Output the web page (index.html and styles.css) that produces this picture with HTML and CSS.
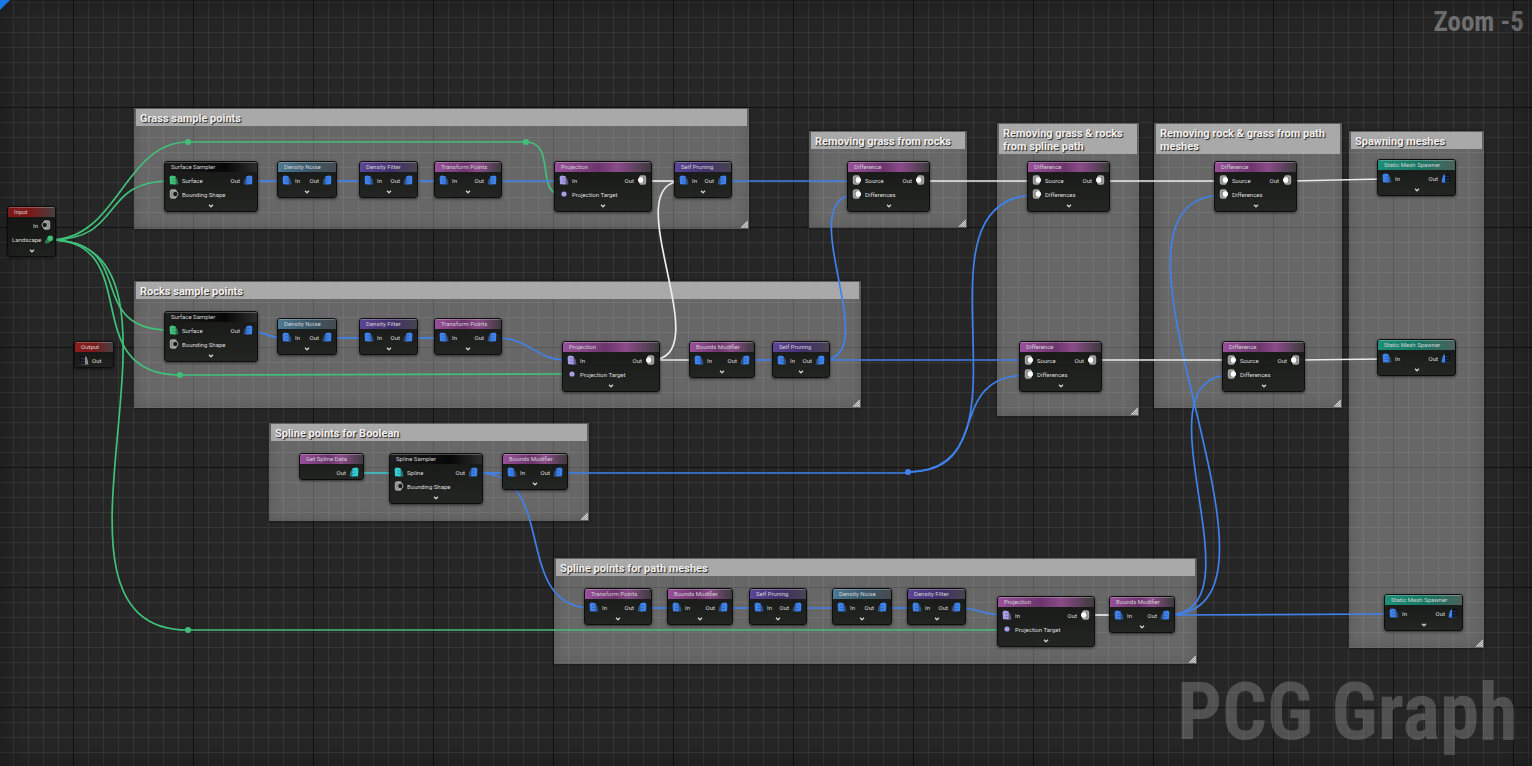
FILE: index.html
```html
<!DOCTYPE html>
<html lang="en">
<head>
  <meta charset="UTF-8">
  <title>PCG Graph</title>
  <link rel="stylesheet" href="styles.css">
</head>
<body>
  <!-- pin shapes, drawn for the input side -->
  <svg class="symbols" aria-hidden="true">
    <symbol id="stack" viewBox="0 0 10 10">
      <path d="M5 1.5 L8 3.5 Q9.4 6 9.4 9.5 H5z" fill="currentColor" opacity=".5"/>
      <path d="M.6 2.5 Q.8 .4 3 .4 L6.6 1.3 V9.5 L1 9.2z" fill="currentColor"/>
      <path d="M3.2 3.5 L6.6 4 M3.2 6.4 L6.6 6.9" stroke="#10203a" stroke-width=".5" opacity=".5"/>
    </symbol>
    <symbol id="stack-open" viewBox="0 0 10 10">
      <path d="M5 .8 L7.5 2 Q9.2 5 9.4 9.5 H5z" fill="currentColor"/>
      <path d="M1 2.5 Q1 .5 3 .5 L6 1 V9.5 L1.5 9z" fill="#10131c"/>
      <path d="M2 3.4 L6 4 M2 6.4 L6 6.9 M1.2 9 L6 9.4" stroke="currentColor" stroke-width=".5" opacity=".7"/>
    </symbol>
    <symbol id="socket" viewBox="0 0 10 10">
      <path d="M3 .3 H6.5 L8 2 V8 L6.5 9.7 H3 Q.8 9.7 .8 7.5 V2.5 Q.8 .3 3 .3z" fill="#a3a3a3"/>
      <path d="M3.2 2 V8" stroke="#666" stroke-width=".8"/>
      <circle cx="6.3" cy="5" r="2.7" fill="#fff"/>
    </symbol>
    <symbol id="socket-open" viewBox="0 0 10 10">
      <path d="M3 .3 H6.5 L8 2 V8 L6.5 9.7 H3 Q.8 9.7 .8 7.5 V2.5 Q.8 .3 3 .3z" fill="#a3a3a3"/>
      <path d="M3 2 V8" stroke="#555" stroke-width=".6"/>
      <circle cx="6.3" cy="5" r="2.7" fill="#181a18" stroke="#c4c4c4" stroke-width=".8"/>
    </symbol>
    <symbol id="multi" viewBox="0 0 10 10">
      <path d="M1 7 L5 2.5 L7.5 7 L4 9.5 H1z" fill="currentColor" opacity=".55"/>
      <circle cx="6.2" cy="4.2" r="2.8" fill="currentColor"/>
    </symbol>
    <symbol id="dot" viewBox="0 0 10 10">
      <circle cx="5" cy="5" r="2.6" fill="currentColor"/>
    </symbol>
    <symbol id="chevron" viewBox="0 0 6 4">
      <path d="M1 .8 L3 2.8 L5 .8" fill="none" stroke="currentColor" stroke-width="1.3"/>
    </symbol>
    <symbol id="grip" viewBox="0 0 8 8">
      <path d="M0 8 L8 0 M2.5 8 L8 2.5 M5 8 L8 5 M7 8 L8 7" stroke="#ddd" stroke-width="1.2"/>
    </symbol>
  </svg>

  <main class="graph">
    <!-- comment boxes -->
    <section class="comment c-grass"><h2>Grass sample points</h2><svg class="grip"><use href="#grip"/></svg></section>
    <section class="comment c-rocks"><h2>Rocks sample points</h2><svg class="grip"><use href="#grip"/></svg></section>
    <section class="comment c-boolean"><h2>Spline points for Boolean</h2><svg class="grip"><use href="#grip"/></svg></section>
    <section class="comment c-path"><h2>Spline points for path meshes</h2><svg class="grip"><use href="#grip"/></svg></section>
    <section class="comment c-from-rocks"><h2>Removing grass from rocks</h2><svg class="grip"><use href="#grip"/></svg></section>
    <section class="comment c-from-spline"><h2>Removing grass &amp; rocks from spline path</h2><svg class="grip"><use href="#grip"/></svg></section>
    <section class="comment c-from-path"><h2>Removing rock &amp; grass from path meshes</h2><svg class="grip"><use href="#grip"/></svg></section>
    <section class="comment c-spawning"><h2>Spawning meshes</h2><svg class="grip"><use href="#grip"/></svg></section>

    <!-- wires -->
    <svg class="wires" aria-hidden="true">
      <g class="wire surface">
        <path d="M50 240 C118 240 124 142 188 142 H526 C556 142 536 194 560 194"/>
        <path d="M50 240 C125 240 98 181 170 181"/>
        <path d="M50 240 C140 240 82 330 170 330"/>
        <path d="M50 240 C146 240 75 375 180 375 L566 374"/>
        <path d="M50 240 C222 240 12 630 188 630 H1003"/>
      </g>
      <g class="wire point">
        <path d="M253 181 H282"/>
        <path d="M332 181 H364"/>
        <path d="M413 181 H439"/>
        <path d="M497 181 H559"/>
        <path d="M727 181 H852"/>
        <path d="M253 331 C262 331 270 338 282 338"/>
        <path d="M332 338 H364"/>
        <path d="M413 338 H439"/>
        <path d="M497 338 C530 338 535 360 567 360"/>
        <path d="M750 360 H777"/>
        <path d="M825 360 H1024"/>
        <path d="M822 360 C887 360 789 195 856 195"/>
        <path d="M478 473 H507"/>
        <path d="M478 473 C560 473 510 608 592 608"/>
        <path d="M563 473 H908"/>
        <path d="M908 472 C1045 472 901 195 1037 195"/>
        <path d="M908 472 C995 472 942 375 1028 375"/>
        <path d="M647 608 H672"/>
        <path d="M728 608 H754"/>
        <path d="M802 608 H837"/>
        <path d="M887 608 H912"/>
        <path d="M961 608 C975 608 985 615 1002 615"/>
        <path d="M1170 615 L1389 614"/>
        <path d="M1167 615 C1323 615 1066 195 1224 195"/>
        <path d="M1167 615 C1267 615 1130 375 1231 375"/>
      </g>
      <g class="wire spline">
        <path d="M359 473 H394"/>
      </g>
      <g class="wire any">
        <path d="M647 181 H679"/>
        <path d="M651 360 C721 360 613 181 683 181"/>
        <path d="M655 360 H694"/>
        <path d="M925 181 H1032"/>
        <path d="M1105 181 H1219"/>
        <path d="M1292 181 L1382 179"/>
        <path d="M1097 360 H1227"/>
        <path d="M1300 360 L1382 359"/>
        <path d="M1090 615 H1114"/>
      </g>
      <g class="reroute surface">
        <circle cx="188" cy="142" r="3"/>
        <circle cx="526" cy="142" r="3"/>
        <circle cx="180" cy="375" r="3"/>
        <circle cx="188" cy="630" r="3"/>
      </g>
      <g class="reroute point">
        <circle cx="908" cy="472" r="3"/>
      </g>
    </svg>

    <!-- graph input / output -->
    <article class="node red n-input">
      <h3>Input</h3>
      <div class="row"><span class="pin out any">In<svg><use href="#socket-open"/></svg></span></div>
      <div class="row"><span class="pin out surface multi">Landscape<svg><use href="#multi"/></svg></span></div>
      <button class="expand" aria-label="Expand Input"><svg><use href="#chevron"/></svg></button>
    </article>
    <article class="node red n-output">
      <h3>Output</h3>
      <div class="row"><span class="pin idle"><svg><use href="#stack-open"/></svg>Out</span></div>
    </article>

    <!-- grass -->
    <article class="node black sampler n-grass-sampler">
      <h3>Surface Sampler</h3>
      <div class="row"><span class="pin surface"><svg><use href="#stack"/></svg>Surface</span><span class="pin out point">Out<svg><use href="#stack"/></svg></span></div>
      <div class="row"><span class="pin"><svg><use href="#socket-open"/></svg>Bounding Shape</span></div>
      <button class="expand" aria-label="Expand Surface Sampler"><svg><use href="#chevron"/></svg></button>
    </article>
    <article class="node steel noise n-grass-noise">
      <h3>Density Noise</h3>
      <div class="row"><span class="pin point"><svg><use href="#stack"/></svg>In</span><span class="pin out point">Out<svg><use href="#stack"/></svg></span></div>
      <button class="expand" aria-label="Expand Density Noise"><svg><use href="#chevron"/></svg></button>
    </article>
    <article class="node violet filter n-grass-filter">
      <h3>Density Filter</h3>
      <div class="row"><span class="pin point"><svg><use href="#stack"/></svg>In</span><span class="pin out point">Out<svg><use href="#stack"/></svg></span></div>
      <button class="expand" aria-label="Expand Density Filter"><svg><use href="#chevron"/></svg></button>
    </article>
    <article class="node pink transform n-grass-transform">
      <h3>Transform Points</h3>
      <div class="row"><span class="pin point"><svg><use href="#stack"/></svg>In</span><span class="pin out point">Out<svg><use href="#stack"/></svg></span></div>
      <button class="expand" aria-label="Expand Transform Points"><svg><use href="#chevron"/></svg></button>
    </article>
    <article class="node pink projection n-grass-projection">
      <h3>Projection</h3>
      <div class="row"><span class="pin concrete"><svg><use href="#stack"/></svg>In</span><span class="pin out">Out<svg><use href="#socket"/></svg></span></div>
      <div class="row"><span class="pin concrete"><svg><use href="#dot"/></svg>Projection Target</span></div>
      <button class="expand" aria-label="Expand Projection"><svg><use href="#chevron"/></svg></button>
    </article>
    <article class="node violet pruning n-grass-pruning">
      <h3>Self Pruning</h3>
      <div class="row"><span class="pin point"><svg><use href="#stack"/></svg>In</span><span class="pin out point">Out<svg><use href="#stack"/></svg></span></div>
      <button class="expand" aria-label="Expand Self Pruning"><svg><use href="#chevron"/></svg></button>
    </article>

    <!-- rocks -->
    <article class="node black sampler n-rocks-sampler">
      <h3>Surface Sampler</h3>
      <div class="row"><span class="pin surface"><svg><use href="#stack"/></svg>Surface</span><span class="pin out point">Out<svg><use href="#stack"/></svg></span></div>
      <div class="row"><span class="pin"><svg><use href="#socket-open"/></svg>Bounding Shape</span></div>
      <button class="expand" aria-label="Expand Surface Sampler"><svg><use href="#chevron"/></svg></button>
    </article>
    <article class="node steel noise n-rocks-noise">
      <h3>Density Noise</h3>
      <div class="row"><span class="pin point"><svg><use href="#stack"/></svg>In</span><span class="pin out point">Out<svg><use href="#stack"/></svg></span></div>
      <button class="expand" aria-label="Expand Density Noise"><svg><use href="#chevron"/></svg></button>
    </article>
    <article class="node violet filter n-rocks-filter">
      <h3>Density Filter</h3>
      <div class="row"><span class="pin point"><svg><use href="#stack"/></svg>In</span><span class="pin out point">Out<svg><use href="#stack"/></svg></span></div>
      <button class="expand" aria-label="Expand Density Filter"><svg><use href="#chevron"/></svg></button>
    </article>
    <article class="node pink transform n-rocks-transform">
      <h3>Transform Points</h3>
      <div class="row"><span class="pin point"><svg><use href="#stack"/></svg>In</span><span class="pin out point">Out<svg><use href="#stack"/></svg></span></div>
      <button class="expand" aria-label="Expand Transform Points"><svg><use href="#chevron"/></svg></button>
    </article>
    <article class="node pink projection n-rocks-projection">
      <h3>Projection</h3>
      <div class="row"><span class="pin concrete"><svg><use href="#stack"/></svg>In</span><span class="pin out">Out<svg><use href="#socket"/></svg></span></div>
      <div class="row"><span class="pin concrete"><svg><use href="#dot"/></svg>Projection Target</span></div>
      <button class="expand" aria-label="Expand Projection"><svg><use href="#chevron"/></svg></button>
    </article>
    <article class="node pink bounds n-rocks-bounds">
      <h3>Bounds Modifier</h3>
      <div class="row"><span class="pin point"><svg><use href="#stack"/></svg>In</span><span class="pin out point">Out<svg><use href="#stack"/></svg></span></div>
      <button class="expand" aria-label="Expand Bounds Modifier"><svg><use href="#chevron"/></svg></button>
    </article>
    <article class="node violet pruning n-rocks-pruning">
      <h3>Self Pruning</h3>
      <div class="row"><span class="pin point"><svg><use href="#stack"/></svg>In</span><span class="pin out point">Out<svg><use href="#stack"/></svg></span></div>
      <button class="expand" aria-label="Expand Self Pruning"><svg><use href="#chevron"/></svg></button>
    </article>

    <!-- spline for boolean -->
    <article class="node pink n-spline-data">
      <h3>Get Spline Data</h3>
      <div class="row"><span class="pin out spline">Out<svg><use href="#stack"/></svg></span></div>
    </article>
    <article class="node black sampler n-spline-sampler">
      <h3>Spline Sampler</h3>
      <div class="row"><span class="pin spline"><svg><use href="#stack"/></svg>Spline</span><span class="pin out point">Out<svg><use href="#stack"/></svg></span></div>
      <div class="row"><span class="pin"><svg><use href="#socket-open"/></svg>Bounding Shape</span></div>
      <button class="expand" aria-label="Expand Spline Sampler"><svg><use href="#chevron"/></svg></button>
    </article>
    <article class="node pink bounds n-spline-bounds">
      <h3>Bounds Modifier</h3>
      <div class="row"><span class="pin point"><svg><use href="#stack"/></svg>In</span><span class="pin out point">Out<svg><use href="#stack"/></svg></span></div>
      <button class="expand" aria-label="Expand Bounds Modifier"><svg><use href="#chevron"/></svg></button>
    </article>

    <!-- spline for path meshes -->
    <article class="node pink transform n-path-transform">
      <h3>Transform Points</h3>
      <div class="row"><span class="pin point"><svg><use href="#stack"/></svg>In</span><span class="pin out point">Out<svg><use href="#stack"/></svg></span></div>
      <button class="expand" aria-label="Expand Transform Points"><svg><use href="#chevron"/></svg></button>
    </article>
    <article class="node pink bounds n-path-bounds">
      <h3>Bounds Modifier</h3>
      <div class="row"><span class="pin point"><svg><use href="#stack"/></svg>In</span><span class="pin out point">Out<svg><use href="#stack"/></svg></span></div>
      <button class="expand" aria-label="Expand Bounds Modifier"><svg><use href="#chevron"/></svg></button>
    </article>
    <article class="node violet pruning n-path-pruning">
      <h3>Self Pruning</h3>
      <div class="row"><span class="pin point"><svg><use href="#stack"/></svg>In</span><span class="pin out point">Out<svg><use href="#stack"/></svg></span></div>
      <button class="expand" aria-label="Expand Self Pruning"><svg><use href="#chevron"/></svg></button>
    </article>
    <article class="node steel noise n-path-noise">
      <h3>Density Noise</h3>
      <div class="row"><span class="pin point"><svg><use href="#stack"/></svg>In</span><span class="pin out point">Out<svg><use href="#stack"/></svg></span></div>
      <button class="expand" aria-label="Expand Density Noise"><svg><use href="#chevron"/></svg></button>
    </article>
    <article class="node violet filter n-path-filter">
      <h3>Density Filter</h3>
      <div class="row"><span class="pin point"><svg><use href="#stack"/></svg>In</span><span class="pin out point">Out<svg><use href="#stack"/></svg></span></div>
      <button class="expand" aria-label="Expand Density Filter"><svg><use href="#chevron"/></svg></button>
    </article>
    <article class="node pink projection n-path-projection">
      <h3>Projection</h3>
      <div class="row"><span class="pin concrete"><svg><use href="#stack"/></svg>In</span><span class="pin out">Out<svg><use href="#socket"/></svg></span></div>
      <div class="row"><span class="pin concrete"><svg><use href="#dot"/></svg>Projection Target</span></div>
      <button class="expand" aria-label="Expand Projection"><svg><use href="#chevron"/></svg></button>
    </article>
    <article class="node pink bounds n-path-bounds-last">
      <h3>Bounds Modifier</h3>
      <div class="row"><span class="pin point"><svg><use href="#stack"/></svg>In</span><span class="pin out point">Out<svg><use href="#stack"/></svg></span></div>
      <button class="expand" aria-label="Expand Bounds Modifier"><svg><use href="#chevron"/></svg></button>
    </article>

    <!-- differences -->
    <article class="node pink difference n-diff-grass-rocks">
      <h3>Difference</h3>
      <div class="row"><span class="pin"><svg><use href="#socket"/></svg>Source</span><span class="pin out">Out<svg><use href="#socket"/></svg></span></div>
      <div class="row"><span class="pin"><svg><use href="#socket"/></svg>Differences</span></div>
      <button class="expand" aria-label="Expand Difference"><svg><use href="#chevron"/></svg></button>
    </article>
    <article class="node pink difference n-diff-grass-spline">
      <h3>Difference</h3>
      <div class="row"><span class="pin"><svg><use href="#socket"/></svg>Source</span><span class="pin out">Out<svg><use href="#socket"/></svg></span></div>
      <div class="row"><span class="pin"><svg><use href="#socket"/></svg>Differences</span></div>
      <button class="expand" aria-label="Expand Difference"><svg><use href="#chevron"/></svg></button>
    </article>
    <article class="node pink difference n-diff-grass-path">
      <h3>Difference</h3>
      <div class="row"><span class="pin"><svg><use href="#socket"/></svg>Source</span><span class="pin out">Out<svg><use href="#socket"/></svg></span></div>
      <div class="row"><span class="pin"><svg><use href="#socket"/></svg>Differences</span></div>
      <button class="expand" aria-label="Expand Difference"><svg><use href="#chevron"/></svg></button>
    </article>
    <article class="node pink difference n-diff-rocks-spline">
      <h3>Difference</h3>
      <div class="row"><span class="pin"><svg><use href="#socket"/></svg>Source</span><span class="pin out">Out<svg><use href="#socket"/></svg></span></div>
      <div class="row"><span class="pin"><svg><use href="#socket"/></svg>Differences</span></div>
      <button class="expand" aria-label="Expand Difference"><svg><use href="#chevron"/></svg></button>
    </article>
    <article class="node pink difference n-diff-rocks-path">
      <h3>Difference</h3>
      <div class="row"><span class="pin"><svg><use href="#socket"/></svg>Source</span><span class="pin out">Out<svg><use href="#socket"/></svg></span></div>
      <div class="row"><span class="pin"><svg><use href="#socket"/></svg>Differences</span></div>
      <button class="expand" aria-label="Expand Difference"><svg><use href="#chevron"/></svg></button>
    </article>

    <!-- spawners -->
    <article class="node teal spawner n-spawn-grass">
      <h3>Static Mesh Spawner</h3>
      <div class="row"><span class="pin point"><svg><use href="#stack"/></svg>In</span><span class="pin out point">Out<svg><use href="#stack-open"/></svg></span></div>
      <button class="expand" aria-label="Expand Static Mesh Spawner"><svg><use href="#chevron"/></svg></button>
    </article>
    <article class="node teal spawner n-spawn-rocks">
      <h3>Static Mesh Spawner</h3>
      <div class="row"><span class="pin point"><svg><use href="#stack"/></svg>In</span><span class="pin out point">Out<svg><use href="#stack-open"/></svg></span></div>
      <button class="expand" aria-label="Expand Static Mesh Spawner"><svg><use href="#chevron"/></svg></button>
    </article>
    <article class="node teal spawner n-spawn-path">
      <h3>Static Mesh Spawner</h3>
      <div class="row"><span class="pin point"><svg><use href="#stack"/></svg>In</span><span class="pin out point">Out<svg><use href="#stack-open"/></svg></span></div>
      <button class="expand" aria-label="Expand Static Mesh Spawner"><svg><use href="#chevron"/></svg></button>
    </article>

    <div class="zoom">Zoom -5</div>
    <div class="watermark">PCG Graph</div>
  </main>
</body>
</html>
```
FILE: styles.css
```css
* {
  box-sizing: border-box;
}

body {
  margin: 0;
  background: #262626;
  font-family: Roboto, "Liberation Sans", sans-serif;
  color: #d0d0d0;
}

.symbols {
  position: absolute;
  width: 0;
  height: 0;
}

/* canvas with a fine 15px grid and a 120px ruler grid */
.graph {
  position: relative;
  min-height: 100vh;
  overflow: hidden;
  background-color: #262626;
  background-image:
    linear-gradient(#121212 1px, transparent 1px),
    linear-gradient(90deg, #121212 1px, transparent 1px),
    linear-gradient(#353535 1px, transparent 1px),
    linear-gradient(90deg, #353535 1px, transparent 1px);
  background-size: 120px 120px, 120px 120px, 15px 15px, 15px 15px;
  background-position: 0 107px, 73px 0, 0 2px, 13px 0;
}

/* edge vignette */
.graph::after {
  content: "";
  position: absolute;
  inset: 0;
  box-shadow: inset 0 0 30px rgba(0, 0, 0, 0.35);
  pointer-events: none;
}

/* blue corner marker */
.graph::before {
  content: "";
  position: absolute;
  z-index: 1;
  left: 0;
  top: 0;
  border-top: 10px solid #1a78e6;
  border-right: 10px solid transparent;
}

.wires {
  position: absolute;
  left: 0;
  top: 0;
  width: 100%;
  height: 100%;
  overflow: visible;
}

.wire {
  fill: none;
  stroke: currentColor;
  stroke-width: 1.7;
}

.reroute {
  fill: currentColor;
}

.surface { color: #41c07a; }
.point { color: #3f82ec; }
.spline { color: #35ccd4; }
.any { color: #ececec; }
.idle { color: #8c8c8c; }
.concrete { color: #a99ce6; }

/* comments */
.comment {
  position: absolute;
  padding: 1px 2px;
  background: rgba(255, 255, 255, 0.3);
  box-shadow: 0 0 2px 1px rgba(0, 0, 0, 0.3), inset 0 0 12px rgba(0, 0, 0, 0.15);
}

.comment h2 {
  margin: 0;
  padding: 3px 4px 1px;
  background: #a9a9a9;
  color: #f0f0f0;
  font-size: 11px;
  font-weight: 700;
  line-height: 13px;
  text-shadow: 1px 1px 1px #222;
}

.grip {
  position: absolute;
  right: 1px;
  bottom: 1px;
  width: 7px;
  height: 7px;
}

.c-grass { left: 134px; top: 108px; width: 615px; height: 121px; }
.c-rocks { left: 134px; top: 281px; width: 727px; height: 127px; }
.c-boolean { left: 269px; top: 423px; width: 320px; height: 98px; }
.c-path { left: 554px; top: 558px; width: 643px; height: 106px; }
.c-from-rocks { left: 809px; top: 131px; width: 158px; height: 97px; }
.c-from-spline { left: 997px; top: 123px; width: 142px; height: 293px; }
.c-from-path { left: 1154px; top: 123px; width: 188px; height: 285px; }
.c-spawning { left: 1349px; top: 131px; width: 135px; height: 517px; }

/* nodes */
.node {
  position: absolute;
  overflow: hidden;
  border: 1px solid #0c0d0c;
  border-radius: 3px;
  background: linear-gradient(rgba(18, 19, 18, 0.94), rgba(30, 33, 29, 0.94));
  box-shadow: 0 1px 3px rgba(0, 0, 0, 0.6);
  font-size: 6px;
}

.node h3 {
  margin: 0 0 1px;
  padding: 0 6px 2px;
  border-top: 1px solid rgba(255, 255, 255, 0.25);
  color: #d2d2d2;
  font-size: 6px;
  font-weight: 400;
  line-height: 7px;
  white-space: nowrap;
}

.row {
  display: flex;
  height: 14px;
  padding: 0 4px;
  align-items: center;
  white-space: nowrap;
}

/* the pin class colours the icon, the label stays light */
.pin {
  display: flex;
  align-items: center;
  gap: 3px;
  -webkit-text-fill-color: #dedede;
}

.pin svg {
  width: 10px;
  height: 10px;
}

.pin.out {
  margin-left: auto;
}

.pin.out svg {
  transform: scaleX(-1);
}

.pin.multi svg {
  transform: none;
}

.expand {
  display: flex;
  width: 100%;
  height: 10px;
  padding: 0;
  border: 0;
  align-items: center;
  justify-content: center;
  background: none;
  color: #d0d0d0;
  cursor: pointer;
}

.expand svg {
  width: 6px;
  height: 4px;
}

.red h3 { background: linear-gradient(90deg, #8c1c1c, #7a1a1a 50%, #454040); }
.black h3 { background: linear-gradient(90deg, #1c1d1c, #070707 65%, #2c2c2c); }
.steel h3 { background: linear-gradient(90deg, #4f7a93, #3a5667 55%, #454b50); }
.violet h3 { background: linear-gradient(90deg, #5c4596, #42306c 55%, #47444f); }
.pink h3 { background: linear-gradient(90deg, #98509a, #6b356b 45%, #8b4b8a 65%, #3c3a3c); }
.teal h3 { background: linear-gradient(90deg, #1d8f78, #177562 55%, #4a615b); }

.sampler { width: 94px; }
.noise { width: 60px; }
.filter { width: 59px; }
.transform { width: 68px; }
.projection { width: 98px; }
.pruning { width: 58px; }
.bounds { width: 66px; }
.difference { width: 83px; }
.spawner { width: 79px; }

.n-input { left: 7px; top: 206px; width: 49px; }
.n-output { left: 74px; top: 341px; width: 40px; }

.n-grass-sampler { left: 164px; top: 161px; }
.n-grass-noise { left: 277px; top: 161px; }
.n-grass-filter { left: 359px; top: 161px; }
.n-grass-transform { left: 434px; top: 161px; }
.n-grass-projection { left: 554px; top: 161px; }
.n-grass-pruning { left: 674px; top: 161px; }

.n-rocks-sampler { left: 164px; top: 311px; }
.n-rocks-noise { left: 277px; top: 318px; }
.n-rocks-filter { left: 359px; top: 318px; }
.n-rocks-transform { left: 434px; top: 318px; }
.n-rocks-projection { left: 562px; top: 341px; }
.n-rocks-bounds { left: 689px; top: 341px; }
.n-rocks-pruning { left: 772px; top: 341px; }

.n-spline-data { left: 299px; top: 453px; width: 65px; }
.n-spline-sampler { left: 389px; top: 453px; }
.n-spline-bounds { left: 502px; top: 453px; }

.n-path-transform { left: 584px; top: 588px; }
.n-path-bounds { left: 667px; top: 588px; }
.n-path-pruning { left: 749px; top: 588px; }
.n-path-noise { left: 832px; top: 588px; }
.n-path-filter { left: 907px; top: 588px; }
.n-path-projection { left: 997px; top: 596px; }
.n-path-bounds-last { left: 1109px; top: 596px; }

.n-diff-grass-rocks { left: 847px; top: 161px; }
.n-diff-grass-spline { left: 1027px; top: 161px; }
.n-diff-grass-path { left: 1214px; top: 161px; }
.n-diff-rocks-spline { left: 1019px; top: 341px; }
.n-diff-rocks-path { left: 1222px; top: 341px; }

.n-spawn-grass { left: 1377px; top: 159px; }
.n-spawn-rocks { left: 1377px; top: 339px; }
.n-spawn-path { left: 1384px; top: 594px; }

/* overlay captions */
.zoom,
.watermark {
  position: absolute;
  right: 8px;
  color: rgba(255, 255, 255, 0.2);
  font-family: "Roboto Condensed", "Liberation Sans Narrow", Roboto, sans-serif;
  font-weight: 700;
  pointer-events: none;
}

.zoom {
  top: 6px;
  color: rgba(255, 255, 255, 0.35);
  font-size: 27px;
  line-height: 32px;
}

.watermark {
  right: 14px;
  bottom: 8px;
  font-size: 79px;
  line-height: 92px;
}
```
